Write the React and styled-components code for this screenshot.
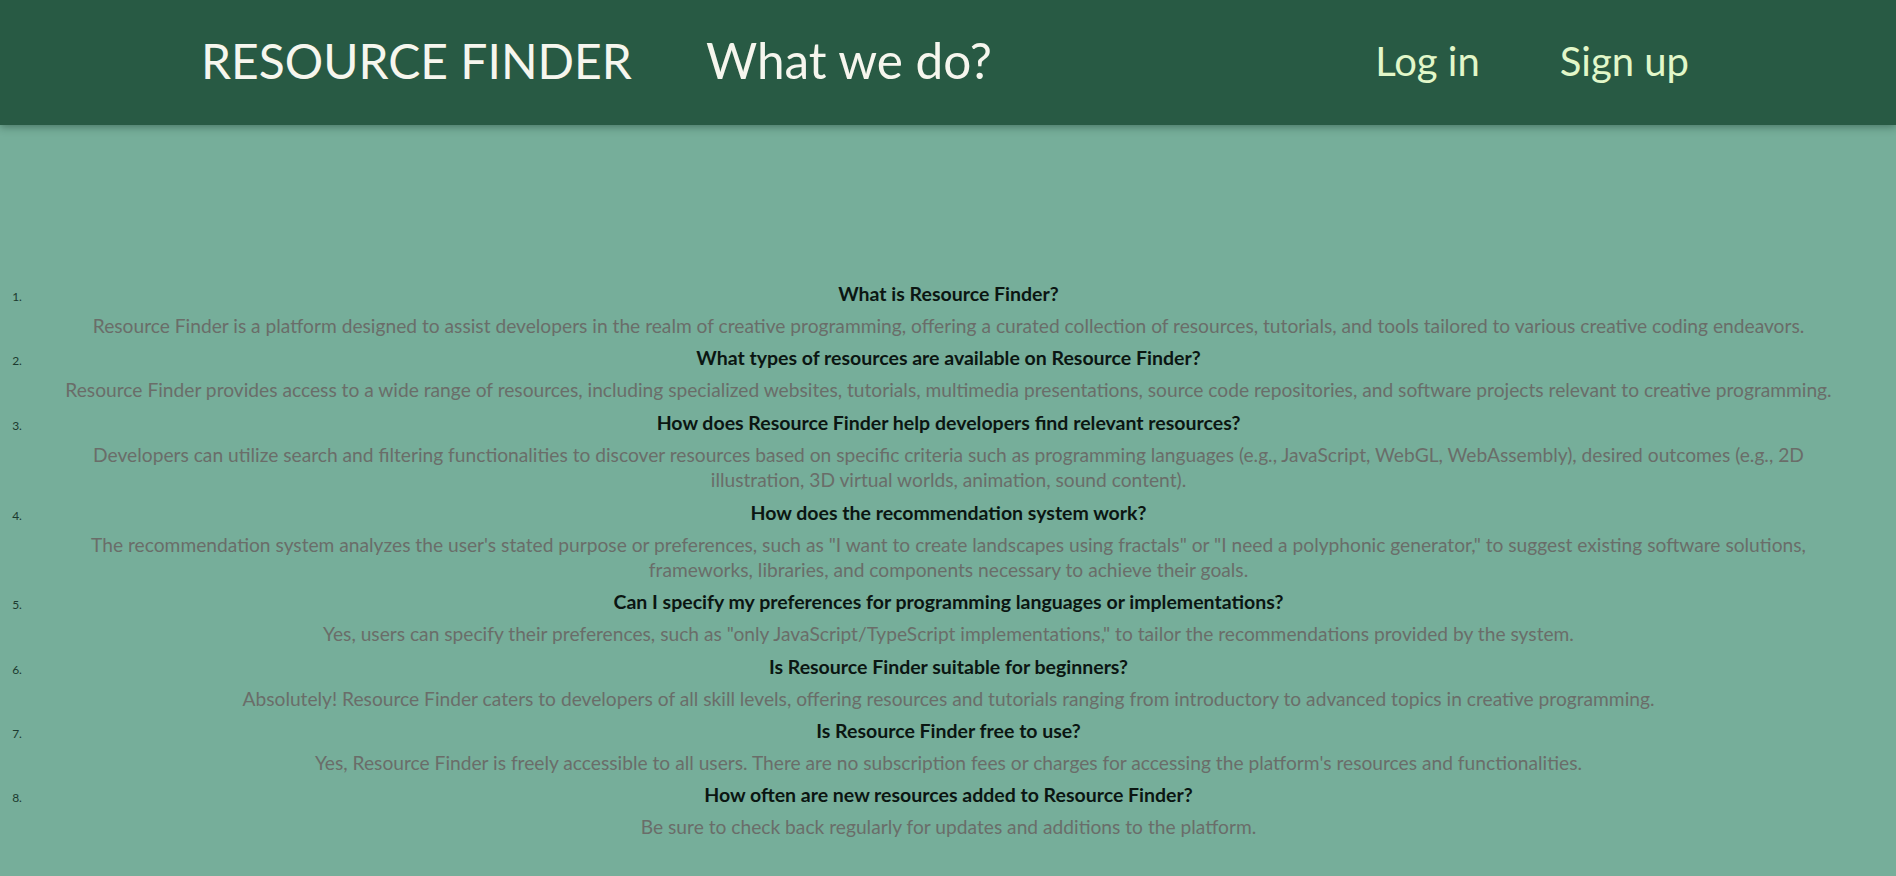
import React from "react";
import styled, { createGlobalStyle } from "styled-components";

const GlobalStyle = createGlobalStyle`
  html, body {
    margin: 0;
    padding: 0;
    background: #76ae9a;
  }
  body {
    font-family: Lato, "Noto Sans", "Open Sans", sans-serif;
    min-height: 876px;
  }
  * { box-sizing: border-box; }
`;

const Header = styled.header`
  height: 125px;
  background: #285a44;
  box-shadow: 0 2px 8px rgba(20, 50, 38, 0.45);
  display: flex;
  align-items: center;
  justify-content: space-between;
  padding: 0 207px 0 201px;
  position: relative;
  z-index: 1;
`;

const Group = styled.nav`
  display: flex;
  align-items: center;
  gap: ${(p) => p.$gap}px;
`;

const NavText = styled.a`
  font-size: ${(p) => p.$size}px;
  color: ${(p) => p.$color};
  text-decoration: none;
  white-space: nowrap;
  line-height: 1;
  padding-bottom: 4px;
`;

const Main = styled.main`
  padding: 158px 0 0;
`;

const List = styled.ol`
  margin: 0;
  padding: 0 24px 0 25px;
  list-style: decimal outside;
`;

const Item = styled.li`
  font-size: 12px;
  color: #1c3a2f;
`;

const Question = styled.h3`
  margin: 0;
  font-size: 19.5px;
  line-height: 22px;
  font-weight: 700;
  color: #0b1612;
  text-align: center;
`;

const Answer = styled.p`
  margin: 8px 0 8.85px;
  padding: 0 24px;
  font-size: 19.2px;
  line-height: 25.5px;
  color: #6a6d69;
  text-align: center;
`;

const faqs = [
  {
    q: "What is Resource Finder?",
    a: "Resource Finder is a platform designed to assist developers in the realm of creative programming, offering a curated collection of resources, tutorials, and tools tailored to various creative coding endeavors.",
  },
  {
    q: "What types of resources are available on Resource Finder?",
    a: "Resource Finder provides access to a wide range of resources, including specialized websites, tutorials, multimedia presentations, source code repositories, and software projects relevant to creative programming.",
  },
  {
    q: "How does Resource Finder help developers find relevant resources?",
    a: "Developers can utilize search and filtering functionalities to discover resources based on specific criteria such as programming languages (e.g., JavaScript, WebGL, WebAssembly), desired outcomes (e.g., 2D illustration, 3D virtual worlds, animation, sound content).",
  },
  {
    q: "How does the recommendation system work?",
    a: "The recommendation system analyzes the user's stated purpose or preferences, such as \"I want to create landscapes using fractals\" or \"I need a polyphonic generator,\" to suggest existing software solutions, frameworks, libraries, and components necessary to achieve their goals.",
  },
  {
    q: "Can I specify my preferences for programming languages or implementations?",
    a: "Yes, users can specify their preferences, such as \"only JavaScript/TypeScript implementations,\" to tailor the recommendations provided by the system.",
  },
  {
    q: "Is Resource Finder suitable for beginners?",
    a: "Absolutely! Resource Finder caters to developers of all skill levels, offering resources and tutorials ranging from introductory to advanced topics in creative programming.",
  },
  {
    q: "Is Resource Finder free to use?",
    a: "Yes, Resource Finder is freely accessible to all users. There are no subscription fees or charges for accessing the platform's resources and functionalities.",
  },
  {
    q: "How often are new resources added to Resource Finder?",
    a: "Be sure to check back regularly for updates and additions to the platform.",
  },
];

export default function App() {
  return (
    <>
      <GlobalStyle />
      <Header>
        <Group $gap={74}>
          <NavText href="#" $size={48} $color="#f6f6ee">RESOURCE FINDER</NavText>
          <NavText href="#" $size={49.5} $color="#f6f6ee">What we do?</NavText>
        </Group>
        <Group $gap={80}>
          <NavText href="#" $size={40} $color="#e2f7c9">Log in</NavText>
          <NavText href="#" $size={40} $color="#e2f7c9">Sign up</NavText>
        </Group>
      </Header>
      <Main>
        <List>
          {faqs.map((f, i) => (
            <Item key={i}>
              <Question>{f.q}</Question>
              <Answer>{f.a}</Answer>
            </Item>
          ))}
        </List>
      </Main>
    </>
  );
}
